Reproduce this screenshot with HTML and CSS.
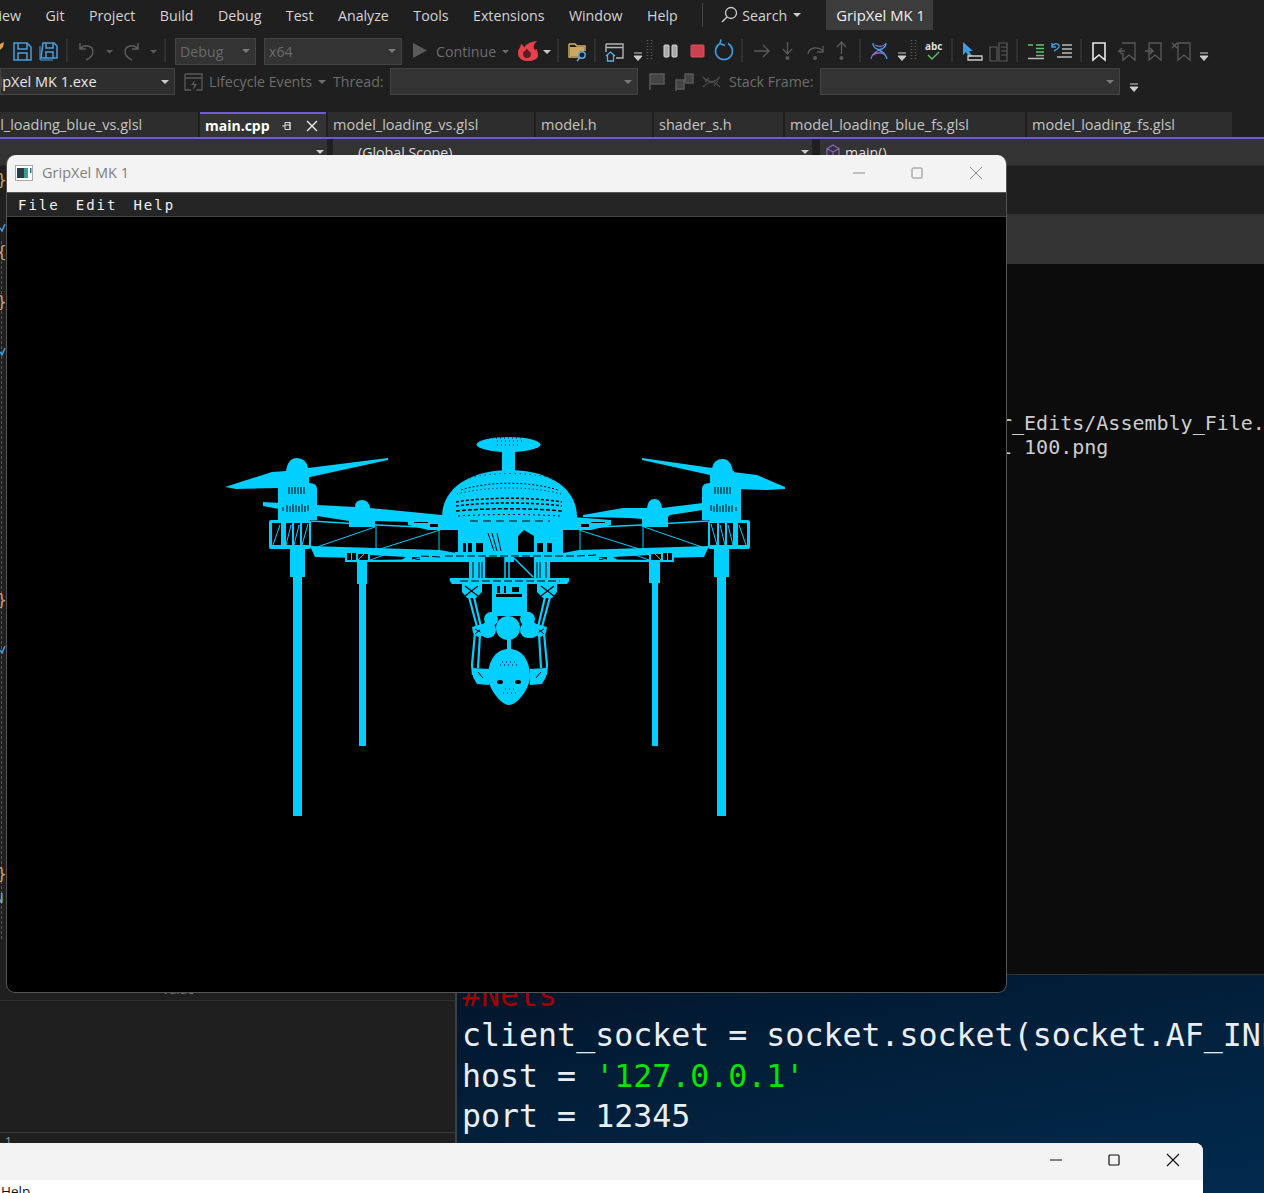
FILE: index.html
```html
<!DOCTYPE html>
<html lang="en">
<head>
    <meta charset="UTF-8">
    <title>GripXel MK 1</title>
    <link rel="stylesheet" href="styles.css">
</head>
<body>
<div class="ide">
    <div class="menubar">
        <span class="menu-item first">View</span>
        <span class="menu-item">Git</span>
        <span class="menu-item">Project</span>
        <span class="menu-item">Build</span>
        <span class="menu-item">Debug</span>
        <span class="menu-item">Test</span>
        <span class="menu-item">Analyze</span>
        <span class="menu-item">Tools</span>
        <span class="menu-item">Extensions</span>
        <span class="menu-item">Window</span>
        <span class="menu-item">Help</span>
        <i class="menu-sep"></i>
        <svg class="search-icon" width="18" height="18" viewBox="0 0 18 18"><circle cx="11" cy="7" r="5.5" fill="none" stroke="#ccc" stroke-width="1.3"/><path d="M7 11l-5 5" stroke="#ccc" stroke-width="1.5"/></svg>
        <span class="search-label">Search</span>
        <i class="caret search-caret"></i>
        <span class="solution-name">GripXel MK 1</span>
    </div>

    <!-- first toolbar row -->
    <div class="toolbar row-one">
        <svg class="tb-a" width="175" height="28" viewBox="0 37 175 28" fill="none">
            <path d="M0 44l4-2-1 5-3 3z" fill="#d9a441"/>
            <path d="M14 43h13l4 4v13H14zM18 43v6h9v-6M18 60v-7h9v7" stroke="#4a9fe0" stroke-width="1.5"/>
            <path d="M43 43h11l3 3v12H41zM46 43v5h7v-5M46 58v-6h7v6" stroke="#4a9fe0" stroke-width="1.5"/>
            <path d="M40 46v14h13" stroke="#4a9fe0" stroke-width="1"/>
            <path d="M67 39v23M165 39v23" stroke="#434343"/>
            <path d="M80 43v6h6M80 49c4-5 13-4 13 3 0 4-3 6-7 8" stroke="#5c5c5c" stroke-width="1.5"/>
            <path d="M138 43v6h-6M138 49c-4-5-13-4-13 3 0 4 3 6 7 8" stroke="#5c5c5c" stroke-width="1.5"/>
            <path d="M106 50h7l-3.500 3.500zM150 50h7l-3.500 3.500z" fill="#5c5c5c"/>
        </svg>
        <span class="combo combo-debug off">Debug<i class="caret"></i></span>
        <span class="combo combo-x64 off">x64<i class="caret"></i></span>
        <svg class="tb-b" width="34" height="28" viewBox="402 37 34 28"><path d="M413 43l14 7.500-14 7.500z" fill="#5a5a5a"/></svg>
        <span class="tb-label lbl-continue">Continue</span>
        <svg class="tb-c" width="769" height="28" viewBox="495 37 769 28" fill="none">
            <path d="M502 50h7l-3.500 3.500z" fill="#6d6d6d"/>
            <path d="M527 61c-6 0-9-4-9-8 0-4 3-6 3-9 2 1 3 2 3 4 1-3 5-6 13-7-3 3-4 5-3 8 1 1 2 1 3 0 0 2 1 4 1 6 0 4-4 6-11 6z" fill="#e5404c"/>
            <path d="M527 58c-3 0-4-2-4-4 0-3 3-3 4-6 0 3 4 3 4 6 0 2-1 4-4 4z" fill="#5e1d25"/>
            <path d="M543 50h8l-4 4z" fill="#ccc"/>
            <path d="M558 39v23M595 39v23M742 39v23M860 39v23M952 39v23M1017 39v23M1081 39v23" stroke="#434343"/>
            <path d="M569 44h6l2 2h8v5M569 44v13h10" stroke="#d9b36a" stroke-width="1.4"/>
            <path d="M570 47h14v4h-4l-2 5h-8z" fill="#c9a765"/>
            <circle cx="582" cy="55" r="3.200" stroke="#5eb0ea" stroke-width="1.400"/>
            <path d="M580 57.500l-3 3.500" stroke="#5eb0ea" stroke-width="1.500"/>
            <path d="M606 44h17v14h-7M606 44v8M606 47.500h17" stroke="#b5b5b5" stroke-width="1.400"/>
            <path d="M606 56l4.500-4 4.500 4M607.500 55v6h6v-6" stroke="#5eb0ea" stroke-width="1.300"/>
            <path d="M634 53h8M634 56h8l-4 4.500zM898 53h8M898 56h8l-4 4.500zM1200 53h8M1200 56h8l-4 4.500z" stroke="#ccc" fill="#ccc"/>
            <path d="M647.500 40v21M651.500 40v21M911.500 40v21M915.500 40v21" stroke="#5a5a5a" stroke-width="1.500" stroke-dasharray="1 2"/>
            <rect x="664" y="45" width="5" height="12" rx="1" fill="#a8a8a8" stroke="#d8d8d8"/>
            <rect x="672" y="45" width="5" height="12" rx="1" fill="#a8a8a8" stroke="#d8d8d8"/>
            <rect x="691" y="45" width="13" height="12" rx="1" fill="#c8434f" stroke="#e0505c"/>
            <path d="M720 43.500a8.500 8.500 0 1 0 8 0M721 39.500l-1 4 5 2" stroke="#3f9ce2" stroke-width="1.600"/>
            <path d="M754 51h15M763 45l6 6-6 6M787.500 42v11M783 49l4.500 5 4.500-5M808 54c1-7 10-8 15-3M823 46v6h-6M841.500 54V43M837 47l4.500-5 4.500 5" stroke="#5a5a5a" stroke-width="1.300"/>
            <circle cx="787.500" cy="58" r="2" fill="#5a5a5a"/>
            <circle cx="815" cy="58" r="2" fill="#5a5a5a"/>
            <circle cx="841.500" cy="58" r="2" fill="#5a5a5a"/>
            <path d="M873 43c0 5 3 6 8 7M886 43c0 4-3 6-7 7 4 2 7 4 8 9" stroke="#4a9fe0" stroke-width="1.400"/>
            <path d="M871 59c1-5 4-7 8-9M875 45c4 2 8 2 10-1M873 55c4-3 10-3 12 0" stroke="#8f6bc8" stroke-width="1.300"/>
            <text x="925" y="50" class="abc">abc</text>
            <path d="M928 55l4 4 7-7" stroke="#5fc46a" stroke-width="1.400"/>
            <path d="M963 42l10 9h-4l3 5-3 1-3-5-3 3z" fill="#3f9ce2"/>
            <path d="M968 56h14v4h-14z" stroke="#ccc" stroke-width="1.300"/>
            <path d="M990 47h7v14h-7zM999 43h8v18h-8zM1001 47h6M1001 51h6M1001 55h6" stroke="#5a5a5a" stroke-width="1.200"/>
            <path d="M1028 45h5M1036 45h8M1036 48.500h8M1036 52h8M1036 55.500h8" stroke="#5fc46a" stroke-width="1.500"/>
            <path d="M1028 58.500h16" stroke="#bbb" stroke-width="1.500"/>
            <path d="M1052 46c3-4 8-2 7 1-1 2-3 3-5 4M1052 43l0 4 4 0" stroke="#3f9ce2" stroke-width="1.400"/>
            <path d="M1062 45h10M1062 49h10M1062 53h10M1057 57h15" stroke="#bbb" stroke-width="1.500"/>
            <path d="M1093 43h12v17l-6-5-6 5z" stroke="#e8e8e8" stroke-width="1.600"/>
            <path d="M1122 43h13v17l-6-5-6 5v-7M1125 51h-6l3-3M1119 51l3 3" stroke="#5a5a5a" stroke-width="1.300"/>
            <path d="M1149 43h12v17l-6-5-6 5zM1145 51h8l-3-3M1153 51l-3 3" stroke="#5a5a5a" stroke-width="1.300"/>
            <path d="M1178 43h12v17l-6-5-6 5zM1172 43l5 5M1177 43l-5 5" stroke="#5a5a5a" stroke-width="1.300"/>
        </svg>
    </div>

    <!-- second toolbar row -->
    <div class="toolbar row-two">
        <span class="combo combo-target"><span class="combo-clip">GripXel MK 1.exe</span><i class="caret"></i></span>
        <svg width="34" height="27" viewBox="175 68 34 27" fill="none"><path d="M185 74h17v16h-6M185 74v16h6M185 78h17" stroke="#5a5a5a" stroke-width="1.300"/><path d="M195 80l-4 5h3l-1 5 4-6h-3z" fill="#5a5a5a"/></svg>
        <span class="tb-label lbl-events">Lifecycle Events</span>
        <i class="caret events-caret"></i>
        <span class="tb-label lbl-thread">Thread:</span>
        <span class="combo combo-thread off"><i class="caret"></i></span>
        <svg width="91" height="27" viewBox="638 68 91 27" fill="none">
            <path d="M650 90V74h14v10h-14" stroke="#5a5a5a" stroke-width="1.500" fill="#444"/>
            <path d="M676 91V80h8v9h-8M685 82v-8h8v9h-8" stroke="#5a5a5a" stroke-width="1.500" fill="#444"/>
            <path d="M703 77c5 6 12 6 17 0M703 87c5-6 12-6 17 0M705 82l4-4M714 86l4-5" stroke="#4e4e4e" stroke-width="1.200"/>
        </svg>
        <span class="tb-label lbl-stack">Stack Frame:</span>
        <span class="combo combo-stack off"><i class="caret"></i></span>
        <svg class="row-end" width="30" height="27" viewBox="1120 68 30 27"><path d="M1130 84h8M1130 87h8l-4 4.500z" stroke="#ccc" fill="#ccc"/></svg>
    </div>

    <div class="tabs">
        <span class="tab tab-first"><span class="tab-clip">model_loading_blue_vs.glsl</span></span>
        <span class="tab tab-main">main.cpp
            <svg class="tab-pin" width="12" height="12" viewBox="0 0 12 12" fill="none"><path d="M1 6h3M4 2.500h5v7H4zM4 5h5M9 2v8" stroke="#ddd"/></svg>
            <svg class="tab-close" width="12" height="12" viewBox="0 0 12 12"><path d="M1 1l10 10M11 1L1 11" stroke="#eee" stroke-width="1.400"/></svg>
        </span>
        <span class="tab tab-vs">model_loading_vs.glsl</span>
        <span class="tab tab-model">model.h</span>
        <span class="tab tab-shader">shader_s.h</span>
        <span class="tab tab-bluefs">model_loading_blue_fs.glsl</span>
        <span class="tab tab-fs">model_loading_fs.glsl</span>
    </div>

    <div class="navbar">
        <span class="nav-box nav-project"><i class="caret"></i></span>
        <span class="nav-box nav-scope">(Global Scope)<i class="caret"></i></span>
        <span class="nav-box nav-func">
            <svg width="16" height="16" viewBox="0 0 16 16" fill="none"><path d="M8 1l6 3.500v7L8 15l-6-3.500v-7zM2 4.500L8 8l6-3.500M8 8v7" stroke="#8a63c4" stroke-width="1.200"/></svg>
            main()
        </span>
    </div>

    <div class="work-top">
        <svg class="gutter" width="6" height="810" viewBox="0 165 6 810">
            <path d="M1.500 240v700" stroke="#555" stroke-dasharray="3 2"/>
            <text x="-3" y="184" class="brace">}</text>
            <text x="-3" y="256" class="brace">{</text>
            <text x="-3" y="306" class="brace">}</text>
            <text x="-3" y="604" class="brace">}</text>
            <text x="-3" y="878" class="brace">}</text>
            <text x="-5" y="902" class="brace-n">N</text>
            <path d="M0 227l2 3 3-7M0 351l2 3 3-7M0 649l2 3 3-7" stroke="#3f9ce2" stroke-width="1.500" fill="none"/>
        </svg>
        <div class="editor-fill"></div>
        <div class="side-pane">
            <div class="pane-head"></div>
            <div class="console">
                <div class="console-line">r_Edits/Assembly_File.</div>
                <div class="console-line">l 100.png</div>
            </div>
        </div>
    </div>

    <div class="work-bottom">
        <div class="locals">
            <div class="locals-head"><span class="locals-value">Value</span></div>
            <div class="locals-body"></div>
            <div class="locals-foot">1</div>
        </div>
        <div class="script">
            <div class="code-line code-comment">#Nets</div>
            <div class="code-line">client_socket = socket.socket(socket.AF_INET</div>
            <div class="code-line">host = <span class="code-str">'127.0.0.1'</span></div>
            <div class="code-line">port = 12345</div>
            <div class="code-line">client_socket.connect((host, port))</div>
        </div>
    </div>
</div>

<!-- render window on top of the IDE -->
<div class="gl-window">
    <div class="titlebar">
        <svg class="app-icon" width="18" height="16" viewBox="0 0 18 16"><rect x=".5" y=".5" width="17" height="15" fill="#fff" stroke="#aaa"/><rect x="2" y="3" width="7" height="10" fill="#2a3a48"/><rect x="9" y="3" width="4" height="10" fill="#3f9a8c"/><rect x="15" y="3" width="1.500" height="5" fill="#2a6a9a"/></svg>
        <span class="title-text">GripXel MK 1</span>
        <span class="win-controls grey">
            <svg width="12" height="12" viewBox="0 0 12 12"><path d="M0 6h12" stroke="currentColor"/></svg>
            <svg width="12" height="12" viewBox="0 0 12 12"><rect x="1" y="1" width="10" height="10" rx="1" fill="none" stroke="currentColor"/></svg>
            <svg width="14" height="14" viewBox="0 0 14 14"><path d="M1 1l12 12M13 1L1 13" stroke="currentColor"/></svg>
        </span>
    </div>
    <div class="gl-menu">
        <span>File</span><span>Edit</span><span>Help</span>
    </div>
    <svg class="viewport" width="998" height="775" viewBox="7 217 998 775">
        <defs>
            <g id="half" fill="#00cfff">
                <!-- front leg -->
                <rect x="290" y="548" width="15" height="29"/>
                <rect x="293" y="570" width="9" height="246"/>
                <!-- motor housing -->
                <path d="M278 489q0-6 7-6v-12h24v12q8 0 8 6v31h-39z"/>
                <path d="M289 487v7M292 487v7M295 487v7M298 487v7M301 487v7M304 487v7M283 507v4M287 505v7M290 506v6M293 504v8M296 505v7M299 506v6M302 504v8M305 506v6M308 505v6" stroke="#000" stroke-width="1"/>
                <!-- frame box -->
                <rect x="269" y="520" width="42" height="29" rx="2"/>
                <rect x="272" y="523" width="9" height="22" fill="#000"/>
                <rect x="286" y="523" width="6" height="22" fill="#000"/>
                <rect x="294" y="523" width="6" height="22" fill="#000"/>
                <rect x="302" y="523" width="7" height="22" fill="#000"/>
                <path d="M273 545l7-20M286 545l5-20M294 545l5-20M302 545l6-21" stroke="#00cfff" fill="none"/>
                <!-- rails -->
                <path d="M310 546l130 4 32 6v6l-30-2-127-3z"/>
                <path d="M345 552h18l107 4v6l-125 0z"/>
                <rect x="347" y="553" width="4" height="7" fill="#000"/>
                <rect x="352" y="553" width="4" height="7" fill="#000"/>
                <path d="M358 554l10 0 0 6h-10zM370 555l36 2-4 2.500-32 .5zM412 557l28 1-3 2h-25z" fill="#000"/>
                <path d="M358 560l6-6M370 560l14-5M412 560l12-3" stroke="#00cfff" fill="none"/>
                <path d="M311 521l66 4 65 3 20 0" stroke="#00cfff" stroke-width="1.500" fill="none"/>
                <path d="M317 547l58-20M376 526v24M380 549l60-19M439 530v22" stroke="#00cfff" fill="none"/>
                <!-- band beside the dome -->
                <path d="M408 520l50-4v14l-30 0-20-5z"/>
                <path d="M430 524h8v3h-8zM414 522h14v1h-14zM444 523h6v2h-6z" fill="#000"/>
                <!-- struts under the rail -->
                <rect x="469" y="556" width="16" height="23"/>
                <path d="M473 558v20M479 558v20M482 558v20" stroke="#000"/>
                <path d="M450 578h60v6h-58q-3-3-2-6z"/>
                <path d="M462 584h20v8l-6 6h-9l-5-6z"/>
                <path d="M465 586l13 10M478 586l-13 10" stroke="#000" stroke-width="1.200"/>
                <!-- arm down to the head -->
                <path d="M469 597l8 30-2 6-3 32 1 10M474 597l7 30-1 7-2 34" stroke="#00cfff" stroke-width="2.200" fill="none"/>
                <path d="M472 627l10-3 5 5v5l-9 3-5-4z"/>
                <path d="M475 629l7 4M475 634l6-5" stroke="#000"/>
                <path d="M473 668l16 1v16l-12-1-4-7z"/>
                <path d="M478 672l5 6" stroke="#000"/>
                <circle cx="488" cy="630" r="8"/>
                <circle cx="491" cy="619" r="7"/>
            </g>
        </defs>

        <!-- rotors -->
        <g fill="#00cfff">
            <path d="M225 487l47-15 14-1q2-13 11-13t11 10l80-10v2l-78 17-32 11-42 1z"/>
            <path d="M263 502l54 3 38 2q0-7 7-7t8 8l72 7v4l-32 3-35-1v6h-26v-6l-32-5-54-10z"/>
            <path d="M642 458l70 10q2-9 10.500-9t10.500 13l24 3 28 12v2l-18 1-55-2-2-13-68-15z"/>
            <path d="M583 515l40-7 24 0q1-9 7.500-9t7.500 9l41-5v7l-33 5-2 2v10h-26v-8l-12-1-47-1z"/>
        </g>

        <!-- back legs -->
        <g fill="#00cfff">
            <rect x="357" y="560" width="10" height="24"/>
            <rect x="359" y="575" width="7" height="171"/>
            <rect x="649" y="560" width="11" height="23"/>
            <rect x="652" y="575" width="6" height="171"/>
        </g>

        <use href="#half"/>
        <use href="#half" transform="translate(1019 0) scale(-1 1)"/>

        <g fill="#00cfff">
            <!-- top disc, stem, dome -->
            <ellipse cx="508.500" cy="444.500" rx="32" ry="7.500"/>
            <rect x="502" y="450" width="13" height="22"/>
            <path d="M442 517c0-30 30-47 67.500-47s67.500 17 67.500 47v8H442z"/>
            <path d="M455 517h108v36H455z"/>
            <rect x="420" y="553" width="179" height="9"/>
        </g>

        <!-- dome mesh -->
        <g fill="none" stroke="#000">
            <path d="M470 478c20-6 60-6 80 0" stroke-dasharray="1 4"/>
            <path d="M461 490c28-9 68-9 97 0" stroke-dasharray="2 2"/>
            <path d="M457 494c30-8 75-8 104 0" stroke-dasharray="1 3"/>
            <path d="M456 502c30-5 76-5 106 0" stroke-dasharray="3 2" stroke-width="1.500"/>
            <path d="M456 506c30-4 76-4 106 0" stroke-dasharray="3 2" stroke-width="1.500"/>
            <path d="M456 511c30-3 76-3 106 0" stroke-dasharray="4 2" stroke-width="1.500"/>
            <path d="M458 516c30-2 72-2 102 0" stroke-dasharray="2 3"/>
            <path d="M470 521h80" stroke-dasharray="8 5"/>
            <path d="M484 438h40M497 441h28M497 445h22" stroke-dasharray="1 3"/>
        </g>

        <!-- cutouts under the dome -->
        <g fill="#000">
            <rect x="476" y="543" width="7" height="9"/>
            <rect x="537" y="543" width="6" height="9"/>
            <path d="M518 552v-16l6-6 5 3 5 3v16z"/>
            <rect x="463" y="543" width="3" height="9"/>
            <rect x="468" y="543" width="4" height="9"/>
            <rect x="547" y="543" width="5" height="9"/>
            <rect x="485" y="557" width="20" height="21"/>
            <rect x="514" y="557" width="20" height="21"/>
            <rect x="453" y="530" width="5" height="22"/>
            <rect x="563" y="530" width="5" height="22"/>
        </g>
        <path d="M488 533l6 18M492 533l5 18M497 533l4 18" stroke="#000" fill="none"/>
        <path d="M514 558l19 19M505 556v22M509 556v22" stroke="#00cfff" stroke-width="1.500" fill="none"/>
        <path d="M421 556l20 1M577 556l20-1M445 556h130M460 581h100" stroke="#000" stroke-width="1" stroke-dasharray="8 3"/>

        <!-- hoist block, stem and head -->
        <g fill="#00cfff">
            <rect x="492" y="584" width="35" height="32"/>
            <circle cx="508" cy="628" r="12"/>
            <circle cx="528" cy="630" r="8"/>
            <circle cx="527" cy="619" r="7"/>
            <rect x="507" y="636" width="4" height="15"/>
            <path d="M488 677c0-18 9-28 21-28s21 10 21 28c0 10-12 28-21 28s-21-18-21-28z"/>
        </g>
        <path d="M496 594h26v3h-26zM497 586h3v7h-3zM504 586h2v7h-2zM512 587h7v5h-7z" fill="#000"/>
        <ellipse cx="500" cy="682" rx="3" ry="2" fill="#000"/>
        <ellipse cx="518" cy="682" rx="3" ry="2" fill="#000"/>
        <path d="M502 662h16M500 665h18M505 689h12M503 693h14" stroke="#000" stroke-dasharray="1 3"/>
    </svg>
</div>

<!-- second window peeking in at the bottom -->
<div class="lower-window">
    <div class="lower-title">
        <span class="win-controls dark">
            <svg width="12" height="12" viewBox="0 0 12 12"><path d="M0 6h12" stroke="currentColor"/></svg>
            <svg width="12" height="12" viewBox="0 0 12 12"><rect x="1" y="1" width="10" height="10" rx="1" fill="none" stroke="currentColor" stroke-width="1.200"/></svg>
            <svg width="14" height="14" viewBox="0 0 14 14"><path d="M1 1l12 12M13 1L1 13" stroke="currentColor" stroke-width="1.200"/></svg>
        </span>
    </div>
    <div class="lower-menu">Help</div>
</div>
</body>
</html>
```

FILE: styles.css
```css
html, body {
    margin: 0;
    padding: 0;
}
body {
    width: 1264px;
    height: 1193px;
    overflow: hidden;
    position: relative;
    background: #1f1f1f;
    font-family: "Open Sans", sans-serif;
    font-size: 14.2px;
}
.ide {
    width: 1264px;
    height: 1193px;
    display: flex;
    flex-direction: column;
    overflow: hidden;
    background: #1f1f1f;
    color: #ccc;
}

/* menu */
.menubar {
    display: flex;
    align-items: center;
    height: 30px;
    margin-bottom: 7px;
    white-space: nowrap;
    flex: none;
}
.menu-item {
    margin-right: 24.5px;
    color: #d4d4d4;
}
.menu-item.first {
    margin-left: -10px;
}
.menu-sep {
    width: 1px;
    height: 24px;
    margin: 0 17px 0 0;
    background: #434343;
}
.search-label {
    margin-left: 4px;
    color: #d4d4d4;
}
.search-caret {
    margin-left: 6px;
}
.solution-name {
    margin-left: 25px;
    box-sizing: border-box;
    padding-left: 10px;
    width: 107px;
    height: 30px;
    line-height: 30px;
    background: #3c3c3c;
    color: #f0f0f0;
    font-size: 14.8px;
}
.caret {
    display: inline-block;
    width: 0;
    height: 0;
    border-left: 4px solid transparent;
    border-right: 4px solid transparent;
    border-top: 4px solid #ccc;
}

/* toolbars */
.toolbar {
    display: flex;
    align-items: center;
    flex: none;
    white-space: nowrap;
}
.toolbar svg {
    flex: none;
    display: block;
}
.row-one {
    height: 28px;
}
.row-two {
    height: 27px;
    margin-top: 3px;
    margin-bottom: 17px;
}
.abc {
    font: bold 10px "Open Sans", sans-serif;
    fill: #ddd;
}
.combo {
    display: flex;
    align-items: center;
    box-sizing: border-box;
    height: 27px;
    padding: 0 5px 0 4px;
    flex: none;
    background: #2e2e2e;
    border: 1px solid #434343;
    color: #e6e6e6;
    overflow: hidden;
}
.combo .caret {
    margin-left: auto;
}
.combo.off {
    background: #333;
    color: #6a6a6a;
}
.combo.off .caret {
    border-top-color: #7a7a7a;
}
.combo-debug {
    width: 81px;
}
.combo-x64 {
    width: 138px;
    margin-left: 8px;
}
.combo-target {
    width: 175px;
}
.combo-clip {
    margin-left: -23px;
    font-size: 14.5px;
    flex: none;
}
.combo-thread {
    width: 248px;
}
.combo-stack {
    width: 300px;
    margin-left: 7px;
}
.tb-label {
    color: #6d6d6d;
    flex: none;
}
.lbl-continue {
    width: 59px;
}
.lbl-events {
    width: 103px;
}
.events-caret {
    margin: 0 7px 0 6px;
    border-top-color: #6d6d6d;
}
.lbl-thread {
    width: 57px;
}
.lbl-stack {
    width: 84px;
}

/* document tabs */
.tabs {
    display: flex;
    height: 25px;
    gap: 2px;
    flex: none;
    overflow: hidden;
    border-bottom: 2px solid #6f5bd0;
}
.tab {
    box-sizing: border-box;
    display: block;
    height: 25px;
    line-height: 25px;
    padding-left: 5px;
    background: #2d2d2d;
    color: #c4c4c4;
    font-size: 14.5px;
    white-space: nowrap;
    overflow: hidden;
    flex: none;
}
.tab-first {
    width: 198px;
}
.tab-clip {
    margin-left: -44px;
    display: inline-block;
}
.tab-main {
    width: 126px;
    display: flex;
    align-items: center;
    background: #333;
    border-top: 2px solid #6f5bd0;
    color: #fff;
    font-size: 14px;
    font-weight: 700;
}
.tab-pin {
    margin-left: auto;
}
.tab-close {
    margin: 0 8px 0 13px;
}
.tab-vs {
    width: 206px;
}
.tab-model {
    width: 116px;
}
.tab-shader {
    width: 129px;
}
.tab-bluefs {
    width: 240px;
}
.tab-fs {
    width: 205px;
}

/* navigation bar over the editor */
.navbar {
    display: flex;
    height: 26px;
    gap: 6px;
    flex: none;
    border-bottom: 1px solid #2a2a2a;
    overflow: hidden;
}
.nav-box {
    display: flex;
    align-items: center;
    box-sizing: border-box;
    height: 26px;
    background: #333;
    color: #ddd;
}
.nav-project {
    width: 327px;
    justify-content: flex-end;
    padding-right: 3px;
}
.nav-scope {
    width: 479px;
    padding: 0 3px 0 25px;
    justify-content: space-between;
}
.nav-func {
    flex: 1;
    margin-left: 2px;
    padding-left: 5px;
    gap: 4px;
}

/* middle of the workspace */
.work-top {
    display: flex;
    height: 809px;
    flex: none;
}
.gutter {
    display: block;
    flex: none;
}
.brace {
    font: 16px "DejaVu Sans Mono", monospace;
    fill: #c9a26a;
}
.brace-n {
    font: 14px "DejaVu Sans Mono", monospace;
    fill: #6fb3d9;
}
.editor-fill {
    width: 1000px;
    flex: none;
}
.side-pane {
    flex: 1;
    display: flex;
    flex-direction: column;
    padding-top: 48px;
    min-width: 0;
}
.pane-head {
    height: 50px;
    background: #333;
    flex: none;
}
.console {
    flex: 1;
    background: #0c0c0c;
    border-bottom: 1px solid #333;
    padding-top: 147px;
    font: 20px/24px "DejaVu Sans Mono", monospace;
    color: #cccccc;
    white-space: nowrap;
    overflow: hidden;
}
.console-line {
    margin-left: -6px;
}

/* bottom of the workspace */
.work-bottom {
    display: flex;
    flex: 1;
    min-height: 0;
}
.locals {
    box-sizing: border-box;
    width: 457px;
    flex: none;
    display: flex;
    flex-direction: column;
    background: #1f1f1f;
    border-right: 2px solid #3f3f3f;
}
.locals-head {
    height: 25px;
    flex: none;
    border-bottom: 1px solid #303030;
    display: flex;
    align-items: flex-end;
}
.locals-value {
    margin: 0 0 2px 162px;
    font-size: 12.5px;
    color: #777;
}
.locals-body {
    height: 131px;
    flex: none;
    border-bottom: 1px solid #3a3a3a;
}
.locals-foot {
    padding-left: 5px;
    font-size: 12px;
    color: #999;
}
.script {
    flex: 1;
    min-width: 0;
    overflow: hidden;
    white-space: nowrap;
    padding: 0 0 0 5px;
    background: linear-gradient(170deg, #02152a 0%, #02223f 55%, #012a4e 100%);
    font: 31.6px/40.4px "DejaVu Sans Mono", monospace;
    color: #e8eef2;
}
.code-comment {
    color: #a30000;
}
.code-str {
    color: #00e600;
}

/* windows on top */
.gl-window {
    position: absolute;
    left: 6px;
    top: 155px;
    box-sizing: border-box;
    width: 1001px;
    height: 838px;
    border: 1px solid #555;
    border-top: 0;
    border-radius: 9px;
    overflow: hidden;
    background: #000;
}
.titlebar {
    display: flex;
    align-items: center;
    box-sizing: border-box;
    height: 37px;
    padding-bottom: 2px;
    background: #f3f3f3;
}
.app-icon {
    margin-left: 8px;
}
.title-text {
    margin-left: 9px;
    font-size: 14.5px;
    color: #7f7f7f;
}
.win-controls {
    margin-left: auto;
    display: flex;
    align-items: center;
    gap: 46px;
    margin-right: 23px;
}
.win-controls.grey {
    color: #8a8a8a;
}
.win-controls.dark {
    color: #111;
}
.gl-menu {
    display: flex;
    align-items: center;
    gap: 16px;
    box-sizing: border-box;
    height: 25px;
    padding-left: 11px;
    background: #252526;
    border-top: 1px solid #555;
    border-bottom: 1px solid #444;
    font: 14px "DejaVu Sans Mono", monospace;
    letter-spacing: 2px;
    color: #f2f2f2;
}
.viewport {
    display: block;
}
.lower-window {
    position: absolute;
    left: 0;
    top: 1143px;
    width: 1203px;
    height: 50px;
    border-top-right-radius: 8px;
    overflow: hidden;
    background: #fff;
}
.lower-title {
    display: flex;
    align-items: center;
    box-sizing: border-box;
    height: 37px;
    padding-bottom: 3px;
    background: #f3f3f3;
}
.lower-menu {
    padding: 2px 0 0 1px;
    font-size: 13.5px;
    line-height: 18px;
    color: #111;
}
```
